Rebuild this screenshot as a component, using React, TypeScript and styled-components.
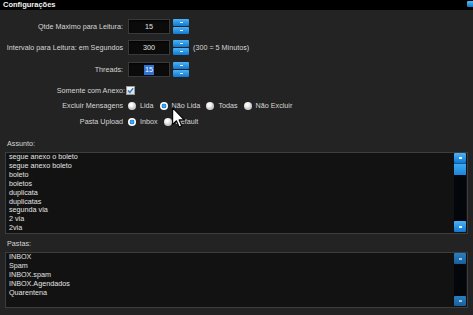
import styled, { createGlobalStyle } from "styled-components";

const GlobalStyle = createGlobalStyle`
  html, body {
    margin: 0;
    padding: 0;
    background: #232323;
  }
  body {
    font-family: "Liberation Sans", Arial, sans-serif;
    font-size: 7.2px;
    color: #dcdcdc;
  }
`;

const Window = styled.div`
  position: relative;
  width: 473px;
  height: 315px;
  overflow: hidden;
  background: #232323;
  display: flex;
  flex-direction: column;
`;

const TitleBar = styled.div`
  height: 10px;
  background: #000;
  display: flex;
  align-items: flex-start;
  justify-content: space-between;
  padding-left: 3px;
  font-weight: bold;
  font-size: 7.5px;
  line-height: 10px;
  color: #f2f2f2;
`;

const CornerBox = styled.span`
  width: 7px;
  height: 6px;
  margin-top: 1px;
  margin-right: -1px;
  border-radius: 1px;
  background: linear-gradient(#5ab8f4, #1278cc);
`;

const Form = styled.div`
  display: flex;
  flex-direction: column;
`;

const FieldRow = styled.div<{ $h: number; $mt: number; $gap?: number; $col?: number }>`
  display: grid;
  grid-template-columns: ${(p) => p.$col ?? 123}px auto;
  column-gap: ${(p) => p.$gap ?? 5}px;
  align-items: center;
  height: ${(p) => p.$h}px;
  margin-top: ${(p) => p.$mt}px;
`;

const FieldLabel = styled.span`
  text-align: right;
  white-space: nowrap;
  color: #d6d6d6;
`;

const InputGroup = styled.div`
  display: flex;
  align-items: center;
  gap: 3px;
`;

const NumberBox = styled.div`
  box-sizing: border-box;
  width: 42px;
  height: 15px;
  background: #0b0b0b;
  border: 1px solid #3a3a3a;
  box-shadow: inset 0 1px 2px rgba(0, 0, 0, 0.8);
  display: flex;
  align-items: center;
  justify-content: center;
  color: #e6e6e6;
`;

const Selected = styled.span`
  background: #2f72d4;
  color: #fff;
  padding: 1px 1px;
  line-height: 8px;
`;

const Spinner = styled.div`
  display: flex;
  flex-direction: column;
  gap: 1px;
  width: 16px;
`;

const SpinButton = styled.div`
  height: 7px;
  border-radius: 1px;
  background: linear-gradient(#4db3f5, #0f78d2);
  display: flex;
  align-items: center;
  justify-content: center;
  &::after {
    content: "";
    width: 3px;
    height: 1px;
    background: #eaf6ff;
  }
`;

const Hint = styled.span`
  margin-left: 1px;
  color: #d6d6d6;
  white-space: nowrap;
`;

const CheckBox = styled.div`
  box-sizing: border-box;
  width: 9px;
  height: 9px;
  border: 1px solid #9a9a9a;
  background: linear-gradient(#ffffff, #d9d9d9);
  display: flex;
  align-items: center;
  justify-content: center;
`;

const RadioGroup = styled.div`
  display: flex;
  align-items: center;
`;

const RadioOption = styled.label`
  display: flex;
  align-items: center;
  gap: 4px;
  margin-right: 6px;
  color: #d6d6d6;
  white-space: nowrap;
`;

const Radio = styled.span<{ $checked?: boolean }>`
  box-sizing: border-box;
  width: 8px;
  height: 8px;
  border-radius: 50%;
  background: ${(p) =>
    p.$checked
      ? "radial-gradient(circle, #59b6f6 0, #1a7fd6 2.4px, #ffffff 2.6px)"
      : "radial-gradient(circle at 40% 35%, #ffffff 0, #f2f2f2 2px, #c9c9c9 4px)"};
`;

const SectionLabel = styled.div<{ $mt: number }>`
  height: 10px;
  line-height: 10px;
  padding-left: 7px;
  margin-top: ${(p) => p.$mt}px;
  color: #d6d6d6;
`;

const ListBox = styled.div<{ $h: number }>`
  box-sizing: border-box;
  margin: 3px 0 0 5px;
  width: 463px;
  height: ${(p) => p.$h}px;
  border: 1px solid #3d3d3d;
  background: #121212;
  display: flex;
`;

const ListItems = styled.div`
  flex: 1;
  padding-left: 3px;
  line-height: 8.9px;
  color: #e2e2e2;
  overflow: hidden;
`;

const ScrollBar = styled.div`
  width: 12px;
  margin: 0 1px 1px 0;
  display: flex;
  flex-direction: column;
  background: #03070c;
`;

const ScrollButton = styled.div<{ $h: number; $dim?: boolean }>`
  height: ${(p) => p.$h}px;
  border-radius: 1px;
  background: ${(p) =>
    p.$dim ? "linear-gradient(#2a7fc0, #175f9c)" : "linear-gradient(#4db3f5, #0f78d2)"};
  display: flex;
  align-items: center;
  justify-content: center;
  &::after {
    content: "";
    width: 3px;
    height: 2px;
    background: ${(p) => (p.$dim ? "#9cc6e6" : "#eaf6ff")};
  }
`;

const ScrollThumb = styled.div`
  height: 11px;
  border-top: 1px solid #0b5fa8;
  background: linear-gradient(#3fa8ef, #1a86dc);
`;

const ScrollTrack = styled.div`
  flex: 1;
`;

const Cursor = styled.svg`
  position: absolute;
  left: 172px;
  top: 107px;
`;

const assuntos = [
  "segue anexo o boleto",
  "segue anexo boleto",
  "boleto",
  "boletos",
  "duplicata",
  "duplicatas",
  "segunda via",
  "2 via",
  "2via",
];

const pastas = ["INBOX", "Spam", "INBOX.spam", "INBOX.Agendados", "Quarentena"];

function NumberField({ value, selected }: { value: string; selected?: boolean }) {
  return (
    <InputGroup>
      <NumberBox>{selected ? <Selected>{value}</Selected> : value}</NumberBox>
      <Spinner>
        <SpinButton />
        <SpinButton />
      </Spinner>
    </InputGroup>
  );
}

export default function App() {
  return (
    <Window>
      <GlobalStyle />
      <TitleBar>
        <span>Configurações</span>
        <CornerBox />
      </TitleBar>

      <Form>
        <FieldRow $h={15} $mt={9}>
          <FieldLabel>Qtde Maximo para Leitura:</FieldLabel>
          <NumberField value="15" />
        </FieldRow>
        <FieldRow $h={15} $mt={6}>
          <FieldLabel>Intervalo para Leitura: em Segundos</FieldLabel>
          <InputGroup>
            <NumberField value="300" />
            <Hint>(300 = 5 Minutos)</Hint>
          </InputGroup>
        </FieldRow>
        <FieldRow $h={15} $mt={7}>
          <FieldLabel>Threads:</FieldLabel>
          <NumberField value="15" selected />
        </FieldRow>
        <FieldRow $h={11} $mt={8} $col={125} $gap={1}>
          <FieldLabel>Somente com Anexo:</FieldLabel>
          <CheckBox>
            <svg width="7" height="7" viewBox="0 0 7 7">
              <path d="M1 3.6 L2.8 5.4 L6.2 1.2" fill="none" stroke="#1f7fd8" strokeWidth="1.4" />
            </svg>
          </CheckBox>
        </FieldRow>
        <FieldRow $h={11} $mt={4}>
          <FieldLabel>Excluir Mensagens</FieldLabel>
          <RadioGroup>
            <RadioOption>
              <Radio />
              Lida
            </RadioOption>
            <RadioOption>
              <Radio $checked />
              Não Lida
            </RadioOption>
            <RadioOption>
              <Radio />
              Todas
            </RadioOption>
            <RadioOption>
              <Radio />
              Não Excluir
            </RadioOption>
          </RadioGroup>
        </FieldRow>
        <FieldRow $h={11} $mt={5}>
          <FieldLabel>Pasta Upload</FieldLabel>
          <RadioGroup>
            <RadioOption>
              <Radio $checked />
              Inbox
            </RadioOption>
            <RadioOption>
              <Radio />
              Default
            </RadioOption>
          </RadioGroup>
        </FieldRow>
      </Form>

      <SectionLabel $mt={12}>Assunto:</SectionLabel>
      <ListBox $h={82}>
        <ListItems>
          {assuntos.map((a) => (
            <div key={a}>{a}</div>
          ))}
        </ListItems>
        <ScrollBar>
          <ScrollButton $h={10} />
          <ScrollThumb />
          <ScrollTrack />
          <ScrollButton $h={11} />
        </ScrollBar>
      </ListBox>

      <SectionLabel $mt={5}>Pastas:</SectionLabel>
      <ListBox $h={56}>
        <ListItems>
          {pastas.map((p) => (
            <div key={p}>{p}</div>
          ))}
        </ListItems>
        <ScrollBar>
          <ScrollButton $h={11} $dim />
          <ScrollTrack />
          <ScrollButton $h={10} $dim />
        </ScrollBar>
      </ListBox>

      <Cursor width="13" height="21" viewBox="0 0 12 19">
        <path
          d="M0.6 0.6 L0.6 15.8 L4.1 12.5 L6.6 18.3 L8.9 17.3 L6.5 11.7 L11.3 11.7 Z"
          fill="#fff"
          stroke="#000"
          strokeWidth="1"
          strokeLinejoin="round"
        />
      </Cursor>
    </Window>
  );
}
